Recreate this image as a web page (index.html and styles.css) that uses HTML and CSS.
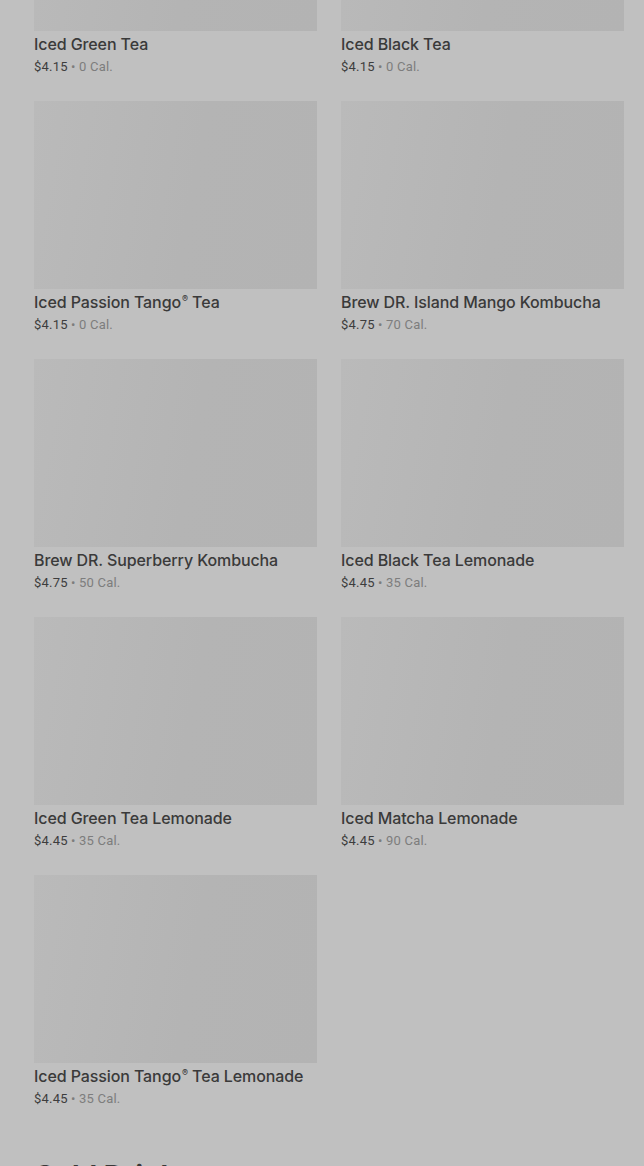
FILE: index.html
```html
<!DOCTYPE html>
<html>
<head>
<meta charset="utf-8">
<link rel="stylesheet" href="styles.css">
</head>
<body>
<main class="page">
  <section class="grid">
    <article class="item"><div class="thumb"></div><h3 class="name">Iced Green Tea</h3><p class="meta"><span class="price">$4.15</span> <span class="cal">• 0 Cal.</span></p></article>
    <article class="item"><div class="thumb"></div><h3 class="name">Iced Black Tea</h3><p class="meta"><span class="price">$4.15</span> <span class="cal">• 0 Cal.</span></p></article>
    <article class="item"><div class="thumb"></div><h3 class="name">Iced Passion Tango<sup class="reg">®</sup> Tea</h3><p class="meta"><span class="price">$4.15</span> <span class="cal">• 0 Cal.</span></p></article>
    <article class="item"><div class="thumb"></div><h3 class="name">Brew DR. Island Mango Kombucha</h3><p class="meta"><span class="price">$4.75</span> <span class="cal">• 70 Cal.</span></p></article>
    <article class="item"><div class="thumb"></div><h3 class="name">Brew DR. Superberry Kombucha</h3><p class="meta"><span class="price">$4.75</span> <span class="cal">• 50 Cal.</span></p></article>
    <article class="item"><div class="thumb"></div><h3 class="name">Iced Black Tea Lemonade</h3><p class="meta"><span class="price">$4.45</span> <span class="cal">• 35 Cal.</span></p></article>
    <article class="item"><div class="thumb"></div><h3 class="name">Iced Green Tea Lemonade</h3><p class="meta"><span class="price">$4.45</span> <span class="cal">• 35 Cal.</span></p></article>
    <article class="item"><div class="thumb"></div><h3 class="name">Iced Matcha Lemonade</h3><p class="meta"><span class="price">$4.45</span> <span class="cal">• 90 Cal.</span></p></article>
    <article class="item"><div class="thumb"></div><h3 class="name">Iced Passion Tango<sup class="reg">®</sup> Tea Lemonade</h3><p class="meta"><span class="price">$4.45</span> <span class="cal">• 35 Cal.</span></p></article>
  </section>
  <h2 class="section-title">Cold Drinks</h2>
</main>
</body>
</html>
```
FILE: styles.css
```css
html, body {
  margin: 0;
  padding: 0;
  background: #c0c0c0;
  height: 100%;
  overflow: hidden;
}
body {
  font-family: Roboto, "Liberation Sans", sans-serif;
  color: #383838;
}
.page {
  padding: 0 20px 0 34px;
  margin-top: -157px;
}
.grid {
  display: grid;
  grid-template-columns: 283px 283px;
  column-gap: 24px;
  row-gap: 25px;
}
.item {
  display: flex;
  flex-direction: column;
}
.thumb {
  height: 188px;
  background: linear-gradient(100deg, #bababa 0%, #b4b4b4 55%, #b3b3b3 100%);
}
.name {
  margin: 3px 0 0;
  font-family: Inter, Roboto, sans-serif;
  font-size: 16px;
  line-height: 20px;
  font-weight: 500;
  letter-spacing: -0.1px;
  color: #3a3a3a;
  white-space: nowrap;
}
.reg {
  font-size: 9px;
  line-height: 0;
  vertical-align: 6px;
  margin-left: 1px;
}
.meta {
  margin: 4px 0 0;
  font-size: 13px;
  line-height: 18px;
  letter-spacing: 0.2px;
}
.price {
  color: #3d3d3d;
}
.cal {
  color: #7d7d7d;
}
.section-title {
  margin: 51px 0 0;
  font-family: Inter, Roboto, sans-serif;
  font-size: 28px;
  line-height: 34px;
  font-weight: 700;
  color: #383838;
}
```
